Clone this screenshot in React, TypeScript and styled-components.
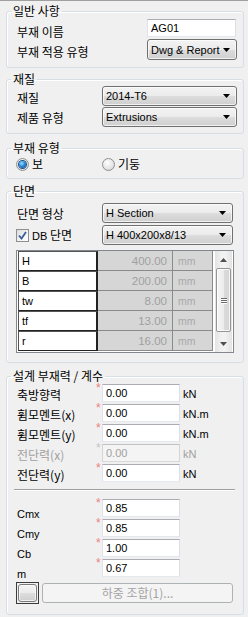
import React from "react";
import styled, { createGlobalStyle } from "styled-components";

const KR = `"Noto Sans CJK KR", "Liberation Sans", sans-serif`;
const LAT = `"Liberation Sans", "Noto Sans CJK KR", sans-serif`;

const GlobalStyle = createGlobalStyle`
  * { box-sizing: border-box; }
  html, body { margin: 0; padding: 0; background: #f0f0f0; }
  body { font-family: ${LAT}; font-size: 11px; color: #000; }
`;

const Panel = styled.div`
  width: 248px;
  height: 617px;
  overflow: hidden;
  background: #f0f0f0;
  border-top: 1px solid #a0a0a0;
  display: flex;
  flex-direction: column;
  align-items: flex-start;
`;

const Group = styled.fieldset<{ $mt: number; $pt: number; $pb: number }>`
  margin: ${(p) => p.$mt}px 0 0 6px;
  width: 238px;
  min-width: 0;
  padding: ${(p) => p.$pt}px 0 ${(p) => p.$pb}px 10px;
  border: 1px solid #d5dfe5;
  border-radius: 3px;
  box-shadow: inset 1px 1px 0 #fff;
  display: flex;
  flex-direction: column;
  align-items: flex-start;
`;

const Legend = styled.legend`
  margin-left: -6px;
  padding: 0 2px;
  font-family: ${KR};
  font-size: 12px;
  line-height: 14px;
  height: 14px;
`;

const Row = styled.div<{ $h: number; $mt?: number }>`
  display: flex;
  align-items: center;
  width: 100%;
  height: ${(p) => p.$h}px;
  margin-top: ${(p) => p.$mt ?? 0}px;
`;

const Label = styled.span<{ $w: number; $drop?: number; $latin?: boolean; $disabled?: boolean }>`
  flex: none;
  width: ${(p) => p.$w}px;
  padding-top: ${(p) => (p.$drop ?? 0) * 2}px;
  font-family: ${(p) => (p.$latin ? LAT : KR)};
  font-size: ${(p) => (p.$latin ? 11 : 12)}px;
  line-height: 14px;
  white-space: nowrap;
  color: ${(p) => (p.$disabled ? "#a0a0a0" : "#000")};
`;

const Select = styled.div<{ $w: number; $h: number }>`
  flex: none;
  width: ${(p) => p.$w}px;
  height: ${(p) => p.$h}px;
  display: flex;
  align-items: center;
  padding: 0 6px 0 3px;
  border: 1px solid #707070;
  border-radius: 3px;
  background: linear-gradient(to bottom, #f3f3f3 0%, #ebebeb 50%, #dddddd 51%, #cfcfcf 100%);
  box-shadow: inset 0 0 0 1px rgba(255, 255, 255, 0.7);
  font-family: ${LAT};
  font-size: 11px;
  color: #000;
`;

const SelectText = styled.span`
  flex: 1;
  white-space: nowrap;
  overflow: hidden;
`;

const Caret = () => (
  <svg width="7" height="4" viewBox="0 0 7 4">
    <path d="M0 0h7L3.5 4z" fill="#000" />
  </svg>
);

const TextBox = styled.input<{ $w: number }>`
  flex: none;
  width: ${(p) => p.$w}px;
  height: 18px;
  margin: 0;
  padding: 0 0 0 3px;
  border: 1px solid;
  border-color: #abadb3 #dbdfe6 #e3e9ef #e2e3ea;
  border-radius: 0;
  background: #fff;
  font-family: ${LAT};
  font-size: 11px;
  color: #000;
  outline: none;
  &:disabled {
    background: #f4f4f4;
    border-color: #c2c2c2 #d5d5d5 #d9d9d9 #d5d5d5;
    color: #a0a0a0;
    -webkit-text-fill-color: #a0a0a0;
  }
`;

/* radio & checkbox */
const RadioRow = styled.div`
  display: flex;
  align-items: center;
  height: 14px;
  margin-left: -1px;
`;

const RadioItem = styled.label`
  display: flex;
  align-items: center;
  gap: 3px;
  width: 86px;
  font-family: ${KR};
  font-size: 12px;
  line-height: 14px;
`;

const RadioDot = styled.span<{ $checked?: boolean }>`
  position: relative;
  flex: none;
  width: 13px;
  height: 13px;
  border-radius: 50%;
  border: 1px solid #8e8f8f;
  background: radial-gradient(circle at 40% 35%, #ffffff 0%, #e6e6e6 55%, #cfcfcf 100%);
  &::after {
    content: "";
    display: ${(p) => (p.$checked ? "block" : "none")};
    position: absolute;
    left: 2px;
    top: 2px;
    width: 7px;
    height: 7px;
    border-radius: 50%;
    background: radial-gradient(circle at 40% 35%, #9fe4ff 0%, #2a8ad8 45%, #0b3f82 100%);
    box-shadow: 0 0 0 1px #1c4f8c;
  }
`;

const CheckLabel = styled.label`
  flex: none;
  display: flex;
  align-items: center;
  gap: 3px;
  width: 86px;
  margin-left: -1px;
  font-family: ${KR};
  font-size: 12px;
  line-height: 14px;
`;

const CheckBox = styled.span`
  flex: none;
  width: 13px;
  height: 13px;
  border: 1px solid #8e8f8f;
  background: linear-gradient(135deg, #dcdcdc 0%, #f4f4f4 60%, #ffffff 100%);
  display: flex;
  align-items: center;
  justify-content: center;
`;

const Latin = styled.span`
  font-family: ${LAT};
  font-size: 11px;
`;

/* property table */
const Table = styled.div`
  flex: none;
  margin: 5px 0 0 -1px;
  width: 218px;
  height: 103px;
  border: 1px solid #828790;
  background: #fff;
  padding: 0 1px;
  display: flex;
  gap: 2px;
`;

const Grid = styled.div`
  display: grid;
  grid-template-columns: 80px 75px 40px;
  grid-auto-rows: 20px;
  align-content: start;
`;

const NameCell = styled.div`
  border-top: 1px solid #555;
  border-left: 1px solid #555;
  border-right: 2px solid #222;
  border-bottom: 1px solid #222;
  background: #fff;
  padding-left: 3px;
  display: flex;
  align-items: center;
  font-family: ${LAT};
  font-size: 11px;
`;

const ValueCell = styled.div<{ $unit?: boolean }>`
  background: #d6d6d6;
  border-right: 1px solid #8a8a8a;
  border-bottom: 1px solid #8a8a8a;
  display: flex;
  align-items: center;
  justify-content: ${(p) => (p.$unit ? "flex-start" : "flex-end")};
  padding: ${(p) => (p.$unit ? "0 0 0 5px" : "0 5px 0 0")};
  font-family: ${LAT};
  font-size: ${(p) => (p.$unit ? 10.5 : 11.5)}px;
  color: ${(p) => (p.$unit ? "#a8a8a8" : "#a0a0a0")};
`;

const ScrollBar = styled.div`
  width: 17px;
  display: flex;
  flex-direction: column;
  background: linear-gradient(to right, #e3e3e3, #f2f2f2 40%, #f2f2f2 60%, #e3e3e3);
`;

const ScrollBtn = styled.div`
  height: 17px;
  display: flex;
  align-items: center;
  justify-content: center;
`;

const Thumb = styled.div`
  height: 64px;
  margin: 0 1px;
  border: 1px solid #959595;
  border-radius: 2px;
  background: linear-gradient(to right, #f6f6f6 0%, #ececec 50%, #dcdcdc 51%, #d4d4d4 100%);
  box-shadow: inset 0 0 0 1px rgba(255, 255, 255, 0.8);
  display: flex;
  flex-direction: column;
  align-items: center;
  justify-content: center;
  gap: 1px;
`;

const Grip = styled.span`
  width: 6px;
  height: 1px;
  background: #6a6a6a;
  box-shadow: 0 1px 0 #fff;
`;

const Track = styled.div`
  flex: 1;
`;

/* design forces */
const ValueRow = styled.div`
  display: grid;
  grid-template-columns: 80px 5px 78px auto;
  height: 20px;
  width: 100%;
`;

const VLabel = styled.span<{ $drop: number; $latin?: boolean; $disabled?: boolean }>`
  align-self: center;
  padding-top: ${(p) => p.$drop * 2}px;
  font-family: ${(p) => (p.$latin ? LAT : KR)};
  font-size: ${(p) => (p.$latin ? 11 : 12)}px;
  line-height: 14px;
  white-space: nowrap;
  color: ${(p) => (p.$disabled ? "#a0a0a0" : "#000")};
`;

/* required-field marker, drawn as a decorative pseudo element */
const Req = styled.span<{ $disabled?: boolean }>`
  align-self: start;
  &::before {
    content: "*";
    display: block;
    margin: 1px 0 0 -1px;
    font-family: ${LAT};
    font-size: 12px;
    line-height: 8px;
    color: ${(p) => (p.$disabled ? "#c4c4c4" : "#ec8282")};
  }
`;

const VInput = styled(TextBox)`
  align-self: start;
  margin-top: 1px;
`;

const Unit = styled.span<{ $disabled?: boolean }>`
  align-self: center;
  margin-left: 3px;
  padding-top: 3px;
  font-family: ${LAT};
  font-size: 11px;
  line-height: 13px;
  color: ${(p) => (p.$disabled ? "#a0a0a0" : "#000")};
`;

const Separator = styled.div`
  align-self: stretch;
  margin: 6px 8px 7px -3px;
  height: 2px;
  border-top: 1px solid #a0a0a0;
  border-bottom: 1px solid #fff;
`;

const ButtonRow = styled.div`
  display: flex;
  align-items: flex-start;
  gap: 3px;
  height: 22px;
  margin: 4px 0 0 -1px;
`;

const SquareBtn = styled.div`
  width: 23px;
  height: 22px;
  border: 1px solid #3c3c3c;
  padding: 1px;
`;

const SquareInner = styled.div`
  width: 100%;
  height: 100%;
  border: 1px solid #7a7a7a;
  border-radius: 3px;
  background: linear-gradient(to bottom, #f4f4f4 0%, #ebebeb 50%, #dddddd 51%, #cfcfcf 100%);
  box-shadow: inset 0 0 0 1px rgba(255, 255, 255, 0.7);
`;

const BigBtn = styled.div`
  width: 191px;
  height: 20px;
  margin-top: 1px;
  border: 1px solid #adb2b5;
  border-radius: 3px;
  background: #f4f4f4;
  display: flex;
  align-items: center;
  justify-content: center;
  font-family: ${KR};
  font-size: 12px;
  line-height: 14px;
  color: #a3a3a3;
`;

const sectionRows = [
  ["H", "400.00"],
  ["B", "200.00"],
  ["tw", "8.00"],
  ["tf", "13.00"],
  ["r", "16.00"],
];

const forces = [
  { label: "축방향력", value: "0.00", unit: "kN" },
  { label: "휨모멘트(x)", value: "0.00", unit: "kN.m" },
  { label: "휨모멘트(y)", value: "0.00", unit: "kN.m" },
  { label: "전단력(x)", value: "0.00", unit: "kN", disabled: true },
  { label: "전단력(y)", value: "0.00", unit: "kN" },
];

const factors = [
  { label: "Cmx", value: "0.85" },
  { label: "Cmy", value: "0.85" },
  { label: "Cb", value: "1.00" },
  { label: "m", value: "0.67" },
];

export default function App() {
  return (
    <>
      <GlobalStyle />
      <Panel>
        <Group $mt={3} $pt={1} $pb={7}>
          <Legend>일반 사항</Legend>
          <Row $h={18}>
            <Label $w={130} $drop={4}>부재 이름</Label>
            <TextBox $w={89} readOnly value="AG01" />
          </Row>
          <Row $h={21} $mt={2}>
            <Label $w={130} $drop={2.5}>부재 적용 유형</Label>
            <Select $w={90} $h={21}>
              <SelectText>Dwg &amp; Report</SelectText>
              <Caret />
            </Select>
          </Row>
        </Group>

        <Group $mt={4} $pt={0} $pb={6}>
          <Legend>재질</Legend>
          <Row $h={20}>
            <Label $w={85} $drop={2}>재질</Label>
            <Select $w={135} $h={20}>
              <SelectText>2014-T6</SelectText>
              <Caret />
            </Select>
          </Row>
          <Row $h={20} $mt={1}>
            <Label $w={85} $drop={1}>제품 유형</Label>
            <Select $w={135} $h={20}>
              <SelectText>Extrusions</SelectText>
              <Caret />
            </Select>
          </Row>
        </Group>

        <Group $mt={7} $pt={2} $pb={7}>
          <Legend>부재 유형</Legend>
          <RadioRow>
            <RadioItem>
              <RadioDot $checked />보
            </RadioItem>
            <RadioItem>
              <RadioDot />기둥
            </RadioItem>
          </RadioRow>
        </Group>

        <Group $mt={5} $pt={5} $pb={9}>
          <Legend>단면</Legend>
          <Row $h={20}>
            <Label $w={85} $drop={1}>단면 형상</Label>
            <Select $w={131} $h={20}>
              <SelectText>H Section</SelectText>
              <Caret />
            </Select>
          </Row>
          <Row $h={20} $mt={2}>
            <CheckLabel>
              <CheckBox>
                <svg width="9" height="9" viewBox="0 0 9 9">
                  <path d="M1 4.5 L3.5 7.5 L8 1" fill="none" stroke="#3d5a9e" strokeWidth="1.8" />
                </svg>
              </CheckBox>
              <span>
                <Latin>DB</Latin> 단면
              </span>
            </CheckLabel>
            <Select $w={131} $h={20}>
              <SelectText>H 400x200x8/13</SelectText>
              <Caret />
            </Select>
          </Row>
          <Table>
            <Grid>
              {sectionRows.map(([n, v]) => (
                <React.Fragment key={n}>
                  <NameCell>{n}</NameCell>
                  <ValueCell>{v}</ValueCell>
                  <ValueCell $unit>mm</ValueCell>
                </React.Fragment>
              ))}
            </Grid>
            <ScrollBar>
              <ScrollBtn>
                <svg width="7" height="4" viewBox="0 0 7 4">
                  <path d="M0 4h7L3.5 0z" fill="#505050" />
                </svg>
              </ScrollBtn>
              <Thumb>
                <Grip />
                <Grip />
                <Grip />
              </Thumb>
              <Track />
              <ScrollBtn>
                <svg width="7" height="4" viewBox="0 0 7 4">
                  <path d="M0 0h7L3.5 4z" fill="#505050" />
                </svg>
              </ScrollBtn>
            </ScrollBar>
          </Table>
        </Group>

        <Group $mt={6} $pt={0} $pb={10}>
          <Legend>설계 부재력 / 계수</Legend>
          {forces.map((f) => (
            <ValueRow key={f.label}>
              <VLabel $drop={2} $disabled={f.disabled}>{f.label}</VLabel>
              <Req $disabled={f.disabled} />
              <VInput $w={78} readOnly disabled={f.disabled} value={f.value} />
              <Unit $disabled={f.disabled}>{f.unit}</Unit>
            </ValueRow>
          ))}
          <Separator />
          {factors.map((f) => (
            <ValueRow key={f.label}>
              <VLabel $drop={4.5} $latin>{f.label}</VLabel>
              <Req />
              <VInput $w={78} readOnly value={f.value} />
              <span />
            </ValueRow>
          ))}
          <ButtonRow>
            <SquareBtn>
              <SquareInner />
            </SquareBtn>
            <BigBtn>하중 조합(1)...</BigBtn>
          </ButtonRow>
        </Group>
      </Panel>
    </>
  );
}
